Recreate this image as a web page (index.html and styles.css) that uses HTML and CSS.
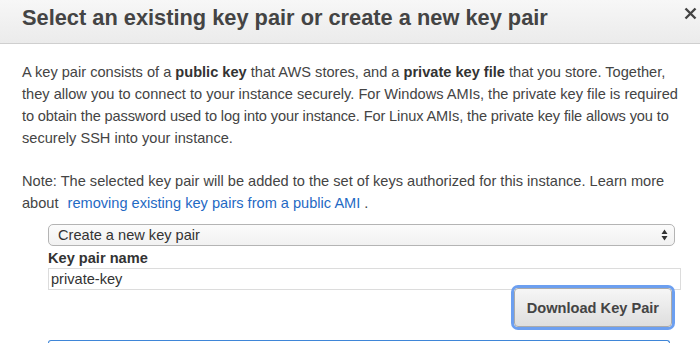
FILE: index.html
```html
<!DOCTYPE html>
<html lang="en">
<head>
    <meta charset="UTF-8">
    <meta name="viewport" content="width=device-width, initial-scale=1.0">
    <title>Select key pair</title>
    <link rel="stylesheet" href="styles.css">
</head>
<body>

    <!-- Dialog -->
    <div class="modal">
        <div class="modal-header">
            <h2 class="modal-title">Select an existing key pair or create a new key pair</h2>
            <svg class="close" width="13" height="13" viewBox="0 0 13 13">
                <path d="M1.5 1.5 L11.5 11.5 M11.5 1.5 L1.5 11.5" stroke="#444" stroke-width="2.4" fill="none"/>
            </svg>
        </div>

        <div class="modal-body">
            <p class="intro">A key pair consists of a <b>public key</b> that AWS stores, and a <b>private key file</b> that you store. Together,<br>
                they allow you to connect to your instance securely. For Windows AMIs, the private key file is required<br>
                <span class="tight">to obtain the password used to log into your instance. For Linux AMIs, the private key file allows you to</span><br>
                securely SSH into your instance.</p>
            <p class="intro">Note: The selected key pair will be added to the set of keys authorized for this instance. Learn more<br>
                <span>about</span><a href="#" class="link">removing existing key pairs from a public AMI</a><span class="dot">.</span></p>

            <div class="form">
                <div class="select">
                    <span>Create a new key pair</span>
                    <svg width="7" height="12" viewBox="0 0 7 12">
                        <path d="M3.5 0.5 L6.5 5 L0.5 5 Z M3.5 11.5 L6.5 7 L0.5 7 Z" fill="#333"/>
                    </svg>
                </div>
                <label class="label">Key pair name</label>
                <input class="input" type="text" value="private-key">
                <div class="actions">
                    <button class="btn">Download Key Pair</button>
                </div>
                <div class="info-box"></div>
            </div>
        </div>
    </div>

</body>
</html>
```

FILE: styles.css
```css
body {
    margin: 0;
    height: 344px;
    font-family: "Liberation Sans", Arial, sans-serif;
    background: white;
    color: #444;
    overflow: hidden;
}
.modal {
    width: 700px;
}
.modal-header {
    height: 43px;
    display: flex;
    align-items: center;
    justify-content: space-between;
    padding: 0 3px 0 22px;
    background: linear-gradient(to bottom, #f7f7f7, #ebebeb);
    border-bottom: 1px solid #cfcfcf;
}
.modal-title {
    margin: 0 0 8px 0;
    font-size: 21.8px;
    font-weight: bold;
    color: #444;
}
.close {
    margin-bottom: 16px;
}
.modal-body {
    padding: 17px 0 0 22px;
}
.modal-body p {
    margin: 0 0 21px 0;
    font-size: 14.6px;
    line-height: 22px;
    color: #444;
}
.modal-body .intro {
    white-space: nowrap;
}
.tight {
    letter-spacing: -0.13px;
}
.modal-body b {
    color: #333;
}
.link {
    color: #1f6ac4;
    text-decoration: none;
    margin-left: 9px;
}
.dot {
    margin-left: 4px;
}
.form {
    margin: -11px 0 0 26px;
}
.select {
    width: 627px;
    height: 22px;
    box-sizing: border-box;
    display: flex;
    align-items: center;
    justify-content: space-between;
    padding: 0 6px 0 9px;
    border: 1px solid #b4b4b4;
    border-radius: 5px;
    background: linear-gradient(to bottom, #fbfbfb, #f1f1f1);
    font-size: 14.6px;
    color: #333;
}
.label {
    display: block;
    margin-top: 2px;
    font-size: 14.6px;
    line-height: 20px;
    font-weight: bold;
    color: #333;
}
.input {
    display: block;
    width: 633px;
    height: 22px;
    box-sizing: border-box;
    margin: 0;
    padding: 0 2px;
    border: 1px solid #dcdcdc;
    font-family: "Liberation Sans", Arial, sans-serif;
    font-size: 14.6px;
    color: #333;
    outline: none;
}
.actions {
    display: flex;
    justify-content: flex-end;
    width: 624px;
    margin-top: -2px;
}
.btn {
    height: 39px;
    padding: 0 12px;
    font-family: "Liberation Sans", Arial, sans-serif;
    font-size: 14.6px;
    font-weight: bold;
    color: #444;
    background: linear-gradient(to bottom, #f6f6f6, #dedede);
    border: 1px solid #aaa;
    border-radius: 4px;
    box-shadow: 0 0 0 3px #6c9ff0;
    box-sizing: border-box;
}
.info-box {
    width: 620px;
    height: 2px;
    margin-top: 13px;
    border: 1px solid #3f86d8;
    border-bottom: none;
    border-radius: 5px 5px 0 0;
}
```
